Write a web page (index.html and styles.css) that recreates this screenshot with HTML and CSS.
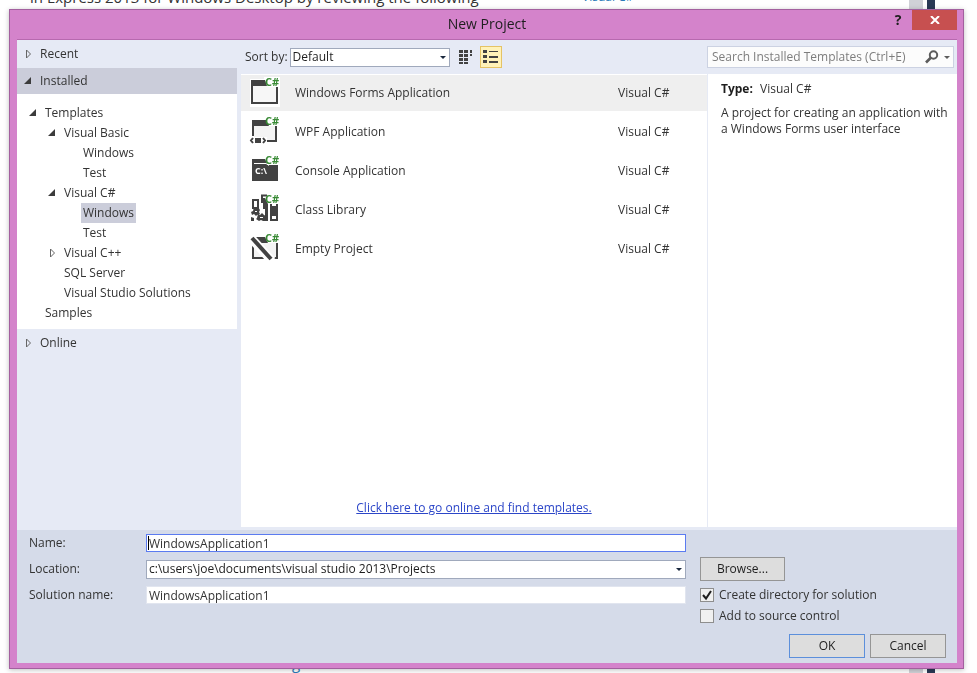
FILE: index.html
```html
<!DOCTYPE html>
<html lang="en">
<head>
<meta charset="utf-8">
<meta name="viewport" content="width=device-width, initial-scale=1.0">
<title>New Project</title>
<link rel="stylesheet" href="styles.css">
</head>
<body>
<div class="page">
  <div class="page-text">
    <div class="page-top"><span class="page-intro">in Express 2013 for Windows Desktop by reviewing the following</span><a class="page-link" href="#">Visual C#</a></div>
    <div class="page-bottom">g</div>
  </div>
  <div class="page-scroll"></div>
  <div class="page-edge"></div>
</div>

<div class="dialog" role="dialog" aria-labelledby="dialog-title">
  <div class="titlebar">
    <h1 id="dialog-title">New Project</h1>
    <div class="window-buttons">
      <button class="help" type="button">?</button>
      <button class="close" type="button" aria-label="Close">
        <svg width="10" height="8" viewBox="0 0 10 8"><path d="M1 0l8 8M9 0L1 8" stroke="#fff" stroke-width="2" fill="none"/></svg>
      </button>
    </div>
  </div>

  <form class="content">
    <div class="browser">
      <div class="sidebar">
        <div class="section"><svg class="arrow" viewBox="0 0 8 10"><path d="M2.500 1v8L6.500 5z" fill="none" stroke="#666"/></svg>Recent</div>
        <div class="section current"><svg class="arrow" viewBox="0 0 8 10"><path d="M7 1v7H0z" fill="#3c3c3c"/></svg>Installed</div>
        <ul class="tree">
          <li><span class="node"><svg class="arrow" viewBox="0 0 8 10"><path d="M7 1v7H0z" fill="#3c3c3c"/></svg><span>Templates</span></span>
            <ul>
              <li><span class="node"><svg class="arrow" viewBox="0 0 8 10"><path d="M7 1v7H0z" fill="#3c3c3c"/></svg><span>Visual Basic</span></span>
                <ul>
                  <li><span class="node leaf"><span>Windows</span></span></li>
                  <li><span class="node leaf"><span>Test</span></span></li>
                </ul>
              </li>
              <li><span class="node"><svg class="arrow" viewBox="0 0 8 10"><path d="M7 1v7H0z" fill="#3c3c3c"/></svg><span>Visual C#</span></span>
                <ul>
                  <li><span class="node leaf"><span class="selected">Windows</span></span></li>
                  <li><span class="node leaf"><span>Test</span></span></li>
                </ul>
              </li>
              <li><span class="node"><svg class="arrow" viewBox="0 0 8 10"><path d="M2.500 1v8L6.500 5z" fill="none" stroke="#666"/></svg><span>Visual C++</span></span></li>
              <li><span class="node leaf"><span>SQL Server</span></span></li>
              <li><span class="node leaf"><span>Visual Studio Solutions</span></span></li>
            </ul>
          </li>
          <li><span class="node leaf"><span>Samples</span></span></li>
        </ul>
        <div class="section"><svg class="arrow" viewBox="0 0 8 10"><path d="M2.500 1v8L6.500 5z" fill="none" stroke="#666"/></svg>Online</div>
      </div>

      <div class="main">
        <div class="toolbar">
          <label for="sort">Sort by:</label>
          <span class="dropdown sort"><select id="sort"><option>Default</option></select></span>
          <button class="view" type="button" aria-label="Small icons">
            <svg width="16" height="16" viewBox="0 0 16 16" fill="#424242"><path d="M1 1h4v3H1zM6 1h4v3H6zM12 1h2v3h-2zM1 5h4v3H1zM6 5h4v3H6zM12 5h2v2h-2zM1 9h4v3H1zM6 9h4v3H6zM1 13h4v2H1zM6 13h4v2H6z"/></svg>
          </button>
          <button class="view active" type="button" aria-label="Medium icons">
            <svg width="16" height="16" viewBox="0 0 16 16" fill="#424242"><path d="M0 1h4v3H0zM0 6h4v3H0zM0 11h4v3H0zM6 2h9v1H6zM6 7h9v2H6zM6 12h9v2H6z"/></svg>
          </button>
          <div class="search">
            <input type="text" placeholder="Search Installed Templates (Ctrl+E)" aria-label="Search Installed Templates">
            <svg width="14" height="14" viewBox="0 0 14 14"><circle cx="8.500" cy="5" r="3.700" fill="none" stroke="#5c5c5c" stroke-width="2"/><path d="M6 7.500L1 12.500" stroke="#5c5c5c" stroke-width="2.600"/></svg>
            <span class="caret-down"></span>
          </div>
        </div>
        <div class="panes">
          <div class="templates">
            <ul class="list">
              <li class="selected">
                <svg class="icon" viewBox="0 0 32 32"><path fill="#fff" d="M1 2h14V0h16v30H1z"/><path fill="#424242" d="M2 3h14l2 6h11v18H2z"/><path fill="#f7f7f7" d="M4 9h23v16H4z"/><path fill="#fff" d="M16 0h15v10H19z"/><text x="16" y="9">C#</text></svg>
                <span class="name">Windows Forms Application</span><span class="lang">Visual C#</span>
              </li>
              <li>
                <svg class="icon" viewBox="0 0 32 32"><path fill="#424242" d="M3 4h14l3 6h8v16H18v-2h8V10H5v10H3z"/><path fill="#f4f4f4" d="M5 10h21v14h-8v-3H5z"/><path fill="#fff" d="M17 0h14v9H20z"/><path fill="#424242" d="M6 22h6v5H6z"/><path d="M4 22l-2 2.500L4 27M14 22l2 2.500L14 27" fill="none" stroke="#424242" stroke-width="2"/><text x="16" y="9">C#</text></svg>
                <span class="name">WPF Application</span><span class="lang">Visual C#</span>
              </li>
              <li>
                <svg class="icon" viewBox="0 0 32 32"><path fill="#424242" d="M3 4h13l3 6h10v16H3z"/><path d="M5 8.500h12l3 2" fill="none" stroke="#fff"/><text class="prompt" x="6" y="19">C:\</text><text x="16" y="9">C#</text></svg>
                <span class="name">Console Application</span><span class="lang">Visual C#</span>
              </li>
              <li>
                <svg class="icon" viewBox="0 0 32 32"><path d="M4 6h5v8H4zM13 9V1.500h5" fill="none" stroke="#424242" stroke-width="2"/><path fill="#424242" d="M14 4h2l3 6v17h-3V15h-2zM21 10h8v17h-8z"/><path fill="#fff" d="M23 10h4v2h-4zM23 22h4v3h-4z"/><path fill="#424242" d="M5 13l2 1 2-1 2 3-1 2 1 2-3 1-1 1-2-2-2 1-1-3 2-1zM2 23l3 1v3H2zM9 20l2 1 2-2 2 2 2 1-1 2 1 3h-3l-2-1-2 1-3-2 1-1z"/><path fill="#fff" d="M6 17h2v1H6zM11 23h3v1h-3z"/><text x="16" y="9">C#</text></svg>
                <span class="name">Class Library</span><span class="lang">Visual C#</span>
              </li>
              <li>
                <svg class="icon" viewBox="0 0 32 32"><path fill="#424242" d="M3 4h13l3 6h10v16H3z"/><path fill="#f4f4f4" d="M5 10h22v14H5z"/><path stroke="#fff" stroke-width="9" d="M2 5l21 23"/><path stroke="#424242" stroke-width="4" d="M3 5l19 21"/><path fill="#fff" d="M17 0h14v9H20z"/><text x="16" y="9">C#</text></svg>
                <span class="name">Empty Project</span><span class="lang">Visual C#</span>
              </li>
            </ul>
            <a class="online" href="#">Click here to go online and find templates.</a>
          </div>
          <div class="details">
            <p><b>Type:</b> Visual C#</p>
            <p class="description">A project for creating an application with a Windows Forms user interface</p>
          </div>
        </div>
      </div>
    </div>

    <div class="settings">
      <label for="name">Name:</label>
      <span class="field focused"><input id="name" type="text" value="WindowsApplication1"></span>
      <span></span>
      <label for="location">Location:</label>
      <span class="dropdown"><select id="location"><option>c:\users\joe\documents\visual studio 2013\Projects</option></select></span>
      <button class="button browse" type="button">Browse...</button>
      <label for="solution">Solution name:</label>
      <span class="field"><input id="solution" type="text" value="WindowsApplication1"></span>
      <label class="check"><input type="checkbox" checked>Create directory for solution</label>
      <label class="check second"><input type="checkbox">Add to source control</label>
      <div class="actions">
        <button class="button default" type="button">OK</button>
        <button class="button" type="button">Cancel</button>
      </div>
    </div>
  </form>
</div>
</body>
</html>
```
FILE: styles.css
```css
*, *:before, *:after { box-sizing: border-box; }
body {
  margin: 0;
  height: 100vh;
  overflow: hidden;
  background: #fff;
  color: #333;
  font-family: "Open Sans", "Noto Sans", sans-serif;
  font-size: 12px;
  line-height: 16px;
}
button, input, select { font: inherit; color: inherit; }
ul { list-style: none; margin: 0; padding: 0; }
p { margin: 0; }

/* web page behind the dialog */
.page { display: flex; height: 100%; padding-right: 42px; }
.page-text {
  flex: 1;
  display: flex;
  flex-direction: column;
  justify-content: space-between;
}
.page-top { display: flex; margin-top: -3px; padding-left: 30px; line-height: 0; }
.page-intro { flex: 0 0 552px; font-size: 15px; }
.page-link { color: #2a7ab8; text-decoration: none; }
.page-bottom { padding-left: 292px; color: #2a7ab8; font-size: 15px; line-height: 20px; }
.page-scroll { width: 14px; background: #d0d1d7; }
.page-edge { width: 8px; margin-left: 4px; background: #293955; }

.dialog {
  position: fixed;
  inset: 9px 13px 4px 9px;
  display: flex;
  flex-direction: column;
  padding: 0 6px 5px 7px;
  background: #d483cb;
  border: 1px solid #a3609f;
  box-shadow: 0 1px 5px rgba(0, 0, 0, .25);
}

.titlebar {
  display: grid;
  grid-template-columns: 1fr auto 1fr;
  height: 30px;
  border-bottom: 1px solid #b769af;
}
.titlebar h1 {
  grid-column: 2;
  margin: 0;
  color: #1e1e1e;
  font-size: 14px;
  font-weight: normal;
  line-height: 28px;
}
.window-buttons { display: flex; justify-content: flex-end; align-items: flex-start; }
.help, .close { height: 20px; padding: 0; border: 0; background: none; }
.help { width: 28px; color: #1e1e1e; font-size: 14px; font-weight: bold; line-height: 20px; }
.close { width: 45px; background: #c75050; }

.content { flex: 1; display: flex; flex-direction: column; min-height: 0; background: #e6eaf5; }
.browser { flex: 1; display: flex; min-height: 0; padding-bottom: 3px; }

.sidebar { flex: 0 0 220px; margin-right: 4px; }
.section { display: flex; align-items: center; height: 28px; padding-left: 7px; }
.section.current { height: 26px; background: #cbcdda; }
.arrow { flex: none; width: 8px; height: 10px; margin-right: 8px; }
.tree { padding: 9px 0 6px 12px; background: #fff; }
.tree ul { padding-left: 19px; }
.node { display: flex; align-items: center; height: 20px; }
.leaf { padding-left: 16px; }
.tree .selected { margin: 0 -2px; padding: 2px; background: #cbcdda; }

.main { flex: 1; display: flex; flex-direction: column; min-width: 0; }
.toolbar { display: flex; align-items: center; height: 34px; padding: 0 3px 0 4px; }
.dropdown { position: relative; display: flex; }
.dropdown:after {
  content: "";
  position: absolute;
  right: 4px;
  top: 50%;
  margin-top: -1px;
  border: 3px solid transparent;
  border-top-color: #1b293e;
  border-bottom: 0;
  pointer-events: none;
}
.dropdown select {
  appearance: none;
  width: 100%;
  height: 19px;
  padding: 0 3px 0 2px;
  border: 1px solid #a0a9bc;
  border-radius: 0;
  background: #fff;
  color: #1e1e1e;
  line-height: 16px;
}
.sort { width: 160px; margin: 0 5px 0 2px; }
.view {
  display: grid;
  place-items: center;
  width: 22px;
  height: 22px;
  margin-right: 3px;
  padding: 0;
  border: 1px solid transparent;
  background: none;
}
.view.active { background: #fff2b8; border-color: #e5c365; }
.search {
  display: flex;
  align-items: center;
  width: 247px;
  height: 22px;
  margin-left: auto;
  padding: 0 3px 0 4px;
  border: 1px solid #ccd2e2;
  background: #fcfcfc;
}
.search input { flex: 1; min-width: 0; padding: 0; border: 0; background: none; outline: 0; }
.search input::placeholder { color: #7d7d7d; opacity: 1; }
.caret-down { margin-left: 5px; border: 3px solid transparent; border-top-color: #5c5c5c; border-bottom: 0; }

.panes { flex: 1; display: flex; min-height: 0; background: #fff; }
.templates { flex: 1; display: flex; flex-direction: column; padding-top: 1px; }
.list { display: flex; flex-direction: column; gap: 3px; }
.list li { display: flex; align-items: center; height: 36px; padding-left: 8px; }
.list .selected { background: #efefef; }
.icon { flex: none; width: 32px; height: 32px; margin-right: 14px; overflow: visible; }
.icon text { fill: #388a34; font-size: 11px; font-weight: bold; }
.icon .prompt { fill: #fff; font-size: 9px; }
.name { flex: 1; }
.lang { width: 89px; }
.online { margin: auto auto 11px; color: #2c46c8; }
.details { flex: 0 0 250px; padding: 7px 4px 7px 13px; border-left: 1px solid #e6eaf5; }
.details b { margin-right: 4px; color: #1e1e1e; }
.description { margin-top: 8px; }

.settings {
  display: grid;
  grid-template-columns: 117px 1fr 260px;
  grid-template-rows: 26px 26px 26px 16px auto;
  align-items: center;
  padding: 0 11px 5px 12px;
  background: #d5dbe9;
}
.settings > :nth-child(3n) { margin-left: 14px; }
.field { position: relative; display: flex; }
.field input {
  width: 100%;
  height: 18px;
  padding: 0 2px;
  border: 1px solid #e1e5ef;
  background: #fff;
  outline: 0;
}
.field.focused input { border-color: #5b7bf0; }
.field.focused:before {
  content: "";
  position: absolute;
  left: 2px;
  top: 2px;
  width: 1px;
  height: 14px;
  background: #000;
}
.button {
  width: 76px;
  height: 24px;
  padding: 0;
  border: 1px solid #959595;
  background: #ddd;
  color: #1e1e1e;
}
.browse { width: 85px; }
.default { border-color: #5c8fdb; }
.check { display: flex; align-items: center; }
.check input {
  appearance: none;
  width: 14px;
  height: 14px;
  margin: 0 5px 0 0;
  border: 1px solid #8e8e8e;
  background: #f0f0f0;
}
.check input:checked {
  background: #f0f0f0 url("data:image/svg+xml,%3Csvg xmlns='http://www.w3.org/2000/svg' viewBox='0 0 12 12'%3E%3Cpath d='M2 6l3 3.500L10 2' fill='none' stroke='%231e1e1e' stroke-width='2'/%3E%3C/svg%3E");
}
.settings .second { grid-column: 3; margin-left: 14px; }
.actions { grid-column: 1 / -1; display: flex; justify-content: flex-end; gap: 5px; margin-top: 10px; }
```
